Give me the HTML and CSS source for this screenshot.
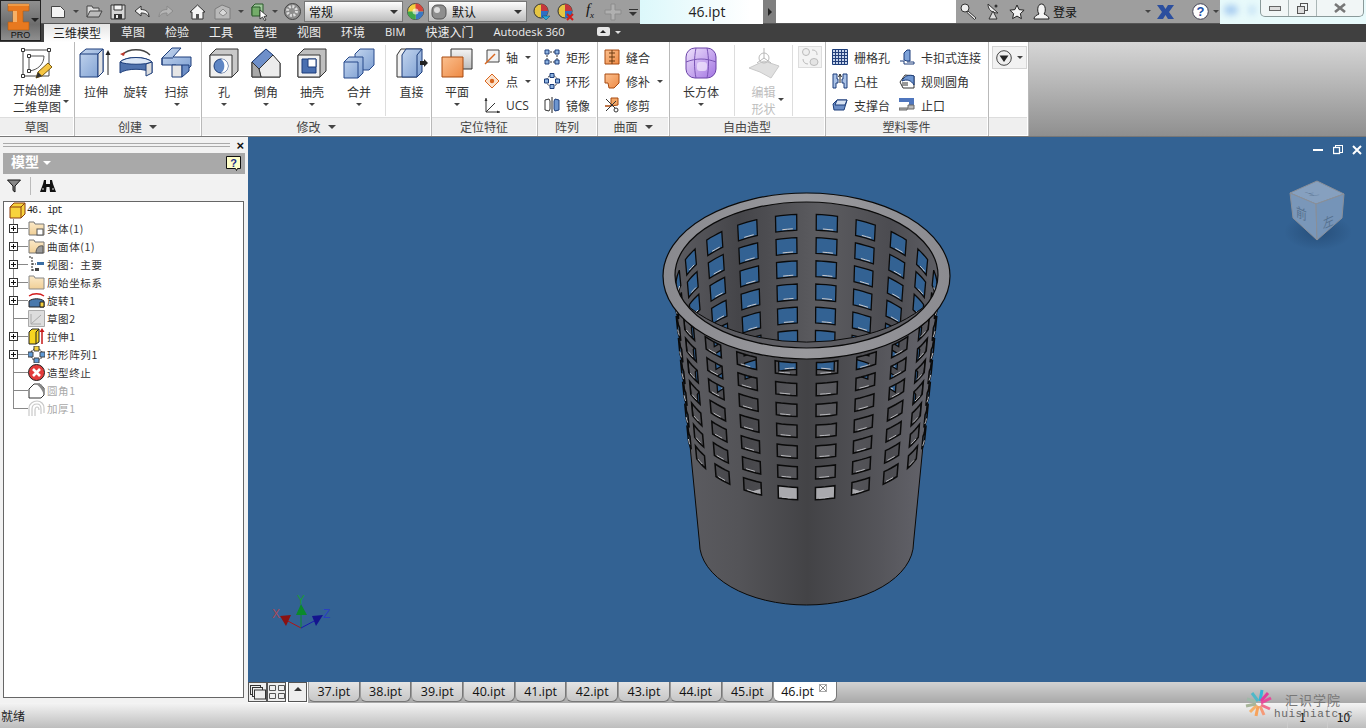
FILE: index.html
```html
<!DOCTYPE html>
<html lang="zh-CN">

<head>
    <meta charset="UTF-8">
    <meta name="viewport" content="width=device-width, initial-scale=1.0">
    <title>46.ipt</title>
    <link rel="stylesheet" href="styles.css">
</head>

<body>
    <svg class="defs" width="0" height="0">
        <defs>
            <linearGradient id="blueFace" x1="0" y1="0" x2="1" y2="1">
                <stop offset="0" stop-color="#c3d5ee" />
                <stop offset="1" stop-color="#7d9fd2" />
            </linearGradient>
            <linearGradient id="greyFace" x1="0" y1="0" x2="0" y2="1">
                <stop offset="0" stop-color="#f4f4f4" />
                <stop offset="1" stop-color="#bdbdbd" />
            </linearGradient>
            <linearGradient id="orangeFace" x1="0" y1="0" x2="1" y2="1">
                <stop offset="0" stop-color="#fbc08f" />
                <stop offset="1" stop-color="#ee8a45" />
            </linearGradient>
            <linearGradient id="purpleFace" x1="0" y1="0" x2="1" y2="1">
                <stop offset="0" stop-color="#efe2fc" />
                <stop offset="1" stop-color="#a274e2" />
            </linearGradient>
            <linearGradient id="folderFace" x1="0" y1="0" x2="0" y2="1">
                <stop offset="0" stop-color="#fbe9c8" />
                <stop offset="1" stop-color="#f0cf96" />
            </linearGradient>
        </defs>
    </svg>

    <!-- app button sits over the title and tab bars -->
    <div class="app-button">
        <svg width="23" height="28" viewBox="0 0 23 28">
            <path d="M1 1h21v7h-6v11h6v8H1v-8h5V8H1z" fill="#e8791f" stroke="#b05a12" stroke-width=".6" />
            <path d="M6 8h4v11H6z" fill="#f6b066" />
            <path d="M1 1h21v2H1z" fill="#f09a45" />
        </svg>
        <span class="app-arrow"></span>
        <span class="app-pro">PRO</span>
    </div>

    <header class="titlebar">
        <div class="qat">
            <button class="qat-btn w24"><svg width="16" height="16" viewBox="0 0 16 16"><path d="M1.500 2.500h9l4 4v7h-13z" fill="#f4f4f4" stroke="#444" /></svg></button>
            <span class="caret w12"></span>
            <button class="qat-btn w24"><svg width="17" height="15" viewBox="0 0 17 15"><path d="M1 13V2h5l1 2h6v3" fill="#ddd" stroke="#444" /><path d="M1 13l3-6h12l-3 6z" fill="#bbb" stroke="#444" /></svg></button>
            <button class="qat-btn w24"><svg width="16" height="16" viewBox="0 0 16 16"><path d="M1 1h14v14H1z" fill="#d5d5d5" stroke="#333" /><path d="M4 1h8v5H4z" fill="#f6f6f6" stroke="#333" /><path d="M4 10h8v5H4z" fill="#333" /><path d="M6 11h2v3H6z" fill="#eee" /></svg></button>
            <button class="qat-btn w24"><svg width="16" height="14" viewBox="0 0 16 14"><path d="M7 1L1 6l6 5V8c3 0 6 .5 8 4 0-5-3-7.500-8-7.500z" fill="#f2f2f2" stroke="#333" /></svg></button>
            <button class="qat-btn w24"><svg width="16" height="14" viewBox="0 0 16 14"><path d="M9 1l6 5-6 5V8c-3 0-6 .5-8 4 0-5 3-7.500 8-7.500z" fill="#b5b5b5" stroke="#8a8a8a" /></svg></button>
            <span class="gap7"></span>
            <button class="qat-btn w24"><svg width="17" height="16" viewBox="0 0 17 16"><path d="M1 8l7.500-7L16 8h-2v7H3V8z" fill="#f6f6f6" stroke="#333" /><path d="M7 10h3v5H7z" fill="#555" /></svg></button>
            <button class="qat-btn w24 ml2"><svg width="18" height="16" viewBox="0 0 18 16"><path d="M1 5l7-4 8 3v11H1z" fill="#b9b9b9" stroke="#7c7c7c" /><path d="M5 9l4-4 4 4-4 3z" fill="#d8d8d8" stroke="#8a8a8a" /></svg></button>
            <span class="caret w12"></span>
            <button class="qat-btn w24"><svg width="17" height="18" viewBox="0 0 17 18"><path d="M1 4l3-3h8v11H1z" fill="#9ec79a" stroke="#2b5a2b" /><path d="M1 4h8v9H1z" fill="#74ac6a" stroke="#2b5a2b" /><path d="M9 7l7 6-3 .5 2 3.500-1.500 .5-2-3.500-2.500 2z" fill="#fff" stroke="#222" stroke-width=".8" /></svg></button>
            <span class="caret w12 tight"></span>
            <button class="qat-btn w24"><svg width="17" height="17" viewBox="0 0 17 17"><circle cx="8.500" cy="8.500" r="8" fill="#8d8d8d" stroke="#444" /><circle cx="8" cy="8" r="4.500" fill="none" stroke="#ddd" stroke-width="3" stroke-dasharray="2 1.500" /></svg></button>
            <div class="combo w99"><span>常规</span><i class="caret"></i></div>
            <button class="qat-btn w25"><svg width="17" height="17" viewBox="0 0 17 17"><circle cx="8.500" cy="8.500" r="8" fill="#f4d03f" stroke="#444" /><path d="M8.500 8.500V.5a8 8 0 0 1 8 8z" fill="#d9453c" /><path d="M8.500 8.500h8a8 8 0 0 1-8 8z" fill="#3b77c4" /><path d="M8.500 8.500v8a8 8 0 0 1-8-8z" fill="#3fa84a" /><circle cx="8.500" cy="8.500" r="3" fill="#fff" opacity=".6" /></svg></button>
            <div class="combo w99"><svg width="16" height="16" viewBox="0 0 16 16"><rect x="1" y="1" width="14" height="14" rx="5" fill="#8e8e8e" stroke="#555" /><circle cx="6" cy="6" r="3" fill="#ddd" /></svg><span>默认</span><i class="caret"></i></div>
            <button class="qat-btn w24 ml3"><svg width="18" height="18" viewBox="0 0 18 18"><circle cx="8" cy="8" r="7" fill="#e6c542" stroke="#333" /><path d="M8 8V1a7 7 0 0 1 7 7z" fill="#c6373c" /><path d="M8 8h7a7 7 0 0 1-7 7z" fill="#2f6fc4" /><path d="M9 13h8l-4 4z" fill="#2aa7d8" stroke="#146" stroke-width=".5" /></svg></button>
            <button class="qat-btn w24"><svg width="18" height="18" viewBox="0 0 18 18"><circle cx="8" cy="8" r="7" fill="#e6c542" stroke="#333" /><path d="M8 8V1a7 7 0 0 1 7 7z" fill="#c6373c" /><path d="M8 8h7a7 7 0 0 1-7 7z" fill="#2f6fc4" /><path d="M10 11l6 6M16 11l-6 6" stroke="#d21c1c" stroke-width="2" /></svg></button>
            <span class="fx">f<sub>x</sub></span>
            <button class="qat-btn w24"><svg width="18" height="18" viewBox="0 0 18 18"><path d="M7 1h4v6h6v4h-6v6H7v-6H1V7h6z" fill="#b0b0b0" stroke="#8c8c8c" /></svg></button>
            <span class="menu-caret"></span>
        </div>
        <div class="doc-title">46.ipt</div>
        <div class="doc-arrow"><i></i></div>
        <div class="search"></div>
        <div class="infocenter">
            <svg width="17" height="17" viewBox="0 0 17 17"><circle cx="5" cy="5" r="4" fill="#eee" stroke="#333" /><path d="M8 8l8 7-1.500 1.500-7.500-7z" fill="#eee" stroke="#333" /></svg>
            <svg width="16" height="17" viewBox="0 0 16 17"><path d="M3 1c0 6 4 9 10 9z" fill="#eee" stroke="#333" /><path d="M8 8L4 16h8z" fill="#ddd" stroke="#333" /><circle cx="11" cy="3" r="1.500" fill="#333" /></svg>
            <svg width="16" height="16" viewBox="0 0 16 16"><path d="M8 1l2.100 4.600 5 .6-3.700 3.400 1 5L8 12.100 3.600 14.600l1-5L.9 6.200l5-.6z" fill="#f3f3f3" stroke="#222" /></svg>
            <svg width="17" height="17" viewBox="0 0 17 17"><path d="M1 16c0-3 3-4 5-5-2-2-2-10 2.500-10S13 9 11 11c2 1 5 2 5 5z" fill="#f4f4f4" stroke="#222" /></svg>
            <span class="login">登录</span>
            <span class="caret login-caret"></span>
            <svg width="17" height="14" viewBox="0 0 17 14"><path d="M0 0h6l2.500 4L11 0h6l-5 7 5 7h-6L8.500 10 6 14H0l5-7z" fill="#2c4f9e" /></svg>
            <svg class="help" width="17" height="17" viewBox="0 0 17 17"><circle cx="8.500" cy="8.500" r="7.800" fill="#fff" stroke="#445" /><text x="8.500" y="13" text-anchor="middle" class="help-mark">?</text></svg>
            <span class="caret help-caret"></span>
        </div>
        <div class="glass">
            <i class="glow g1"></i><i class="glow g2"></i>
            <div class="winbtns">
                <span><svg width="12" height="5"><rect x=".5" y=".5" width="11" height="4" fill="#ddd" stroke="#666" /></svg></span>
                <span><svg width="11" height="11"><rect x="3.500" y=".5" width="7" height="7" fill="none" stroke="#555" /><rect x=".5" y="3.500" width="7" height="7" fill="#ddd" stroke="#555" /></svg></span>
                <span class="wide"><svg width="12" height="10" viewBox="0 0 12 10"><path d="M1 1l10 8M11 1L1 9" stroke="#777" stroke-width="2.600" /></svg></span>
            </div>
        </div>
    </header>

    <nav class="tabs">
        <a class="tab active">三维模型</a>
        <a class="tab">草图</a>
        <a class="tab">检验</a>
        <a class="tab">工具</a>
        <a class="tab">管理</a>
        <a class="tab">视图</a>
        <a class="tab">环境</a>
        <a class="tab latin">BIM</a>
        <a class="tab">快速入门</a>
        <a class="tab latin">Autodesk 360</a>
        <span class="tab-toggle"><i></i></span>
        <span class="tab-caret"></span>
    </nav>

    <section class="ribbon">
        <div class="panel" style="width:75px">
            <div class="panel-body">
                <div class="big w74 sketch-btn">
                    <svg width="34" height="34" viewBox="0 0 34 34">
                        <path d="M3 3h26v26H3z" fill="none" stroke="#444" />
                        <path d="M9 9h15M9 9v15" fill="none" stroke="#555" /><path d="M24 9c0 8-6 14-15 15" fill="none" stroke="#555" />
                        <path d="M1.500 1.500h3v3h-3zM27.500 1.500h3v3h-3zM1.500 27.500h3v3h-3zM7.500 7.500h3v3h-3zM7.500 22.500h3v3h-3z" fill="#fff" stroke="#333" />
                        <path d="M16 31l2-6 10-9 4 4-10 9z" fill="#f5c542" stroke="#7a5a10" /><path d="M16 31l2-6 4 4z" fill="#333" />
                    </svg>
                    <span class="sketch-label">开始创建<br>二维草图</span>
                    <i class="caret sketch-caret"></i>
                </div>
            </div>
            <div class="panel-title">草图</div>
        </div>

        <div class="panel" style="width:127px">
            <div class="panel-body">
                <div class="big w40 ml1">
                    <svg width="34" height="32" viewBox="0 0 34 32"><path d="M1 7l6-5h17v23l-5 5H1z" fill="url(#blueFace)" stroke="#1c3d7a" /><path d="M19 30V7l5-5M1 7h18" fill="none" stroke="#1c3d7a" /><path d="M19 7l5-5v23l-5 5z" fill="#e4e4e4" stroke="#1c3d7a" /><path d="M29 28V7" stroke="#222" /><path d="M29 3l-2.500 5h5z" fill="#222" /></svg>
                    <span>拉伸</span>
                </div>
                <div class="big w39">
                    <svg width="34" height="32" viewBox="0 0 34 32"><path d="M3 8C10 1 24 1 31 8" fill="none" stroke="#444" stroke-width="1.500" /><path d="M1 7l5-2-1 4z" fill="#c0392b" /><path d="M1 15c6-6 26-6 32 0v11c-6-5-26-5-32 0z" fill="#4f72ad" stroke="#1c3d7a" /><path d="M1 15c6-6 26-6 32 0-6 3-26 3-32 0z" fill="#dbe6f5" stroke="#1c3d7a" /><path d="M27 17l6-2v11l-6 3z" fill="#ddd" stroke="#1c3d7a" /></svg>
                    <span>旋转</span>
                </div>
                <div class="big w43">
                    <svg width="32" height="32" viewBox="0 0 32 32"><path d="M1 11L11 1h9l-8 9h18v9l-7 7H15v-8H1z" fill="url(#blueFace)" stroke="#1c3d7a" /><path d="M11 18h10v12H11z" fill="#e6e6e6" stroke="#1c3d7a" /><path d="M21 30l7-6v-6l-7 0z" fill="#6d8fc7" stroke="#1c3d7a" /><path d="M1 11h11M1 11v7" fill="none" stroke="#1c3d7a" /></svg>
                    <span>扫掠</span><i class="caret"></i>
                </div>
            </div>
            <div class="panel-title">创建<i class="caret"></i></div>
        </div>

        <div class="panel" style="width:230px">
            <div class="panel-body">
                <div class="big w42 ml1">
                    <svg width="30" height="30" viewBox="0 0 30 30"><path d="M1 7l6-6h22v22l-6 6H1z" fill="#c9c9c9" stroke="#333" /><path d="M1 7h22v22H1z" fill="#efefef" stroke="#333" /><circle cx="12" cy="18" r="7" fill="#5f86c4" stroke="#1c3d7a" /><path d="M12 11a7 7 0 0 1 0 14 9 9 0 0 0 0-14z" fill="#fff" /></svg>
                    <span>孔</span><i class="caret"></i>
                </div>
                <div class="big w42">
                    <svg width="30" height="30" viewBox="0 0 30 30"><path d="M1 14L15 1l14 14v14H1z" fill="#d9d9d9" stroke="#333" /><path d="M1 14L15 1l7 6L8 21z" fill="#6e8fc9" stroke="#1c3d7a" /><path d="M8 21L22 7l7 8v14H10z" fill="#ececec" stroke="#333" /><path d="M1 14l7 7 2 8H1z" fill="#a8a8a8" stroke="#333" /></svg>
                    <span>倒角</span><i class="caret"></i>
                </div>
                <div class="big w46 ml2">
                    <svg width="30" height="30" viewBox="0 0 30 30"><path d="M1 7l6-6h22v22l-6 6H1z" fill="#bfbfbf" stroke="#333" /><path d="M1 7h22v22H1z" fill="#f1f1f1" stroke="#333" /><path d="M5 11h14v14H5z" fill="#496fb0" stroke="#1c3d7a" /><path d="M11 11h8v8h-8z" fill="#fff" stroke="#1c3d7a" /></svg>
                    <span>抽壳</span><i class="caret"></i>
                </div>
                <div class="big w48">
                    <svg width="32" height="30" viewBox="0 0 32 30"><path d="M12 6l5-5h14v16l-5 5H12z" fill="url(#blueFace)" stroke="#27498a" /><path d="M1 14l5-5h14v16l-5 5H1z" fill="url(#blueFace)" stroke="#27498a" /><path d="M1 14h14v16" fill="none" stroke="#27498a" /></svg>
                    <span>合并</span><i class="caret"></i>
                </div>
                <span class="vsep"></span>
                <div class="big w43 ml2">
                    <svg width="32" height="30" viewBox="0 0 32 30"><path d="M1 7l4-6h20v23l-4 5H1z" fill="#f1f1f1" stroke="#333" /><path d="M6 7l4-6h16v23l-5 5H6z" fill="url(#blueFace)" stroke="#1c3d7a" /><path d="M21 29V7l5-6" fill="none" stroke="#1c3d7a" /><path d="M24 13h4v-2l4 4-4 4v-2h-4z" fill="#222" /></svg>
                    <span>直接</span>
                </div>
            </div>
            <div class="panel-title">修改<i class="caret"></i></div>
        </div>

        <div class="panel" style="width:106px">
            <div class="panel-body">
                <div class="big w46 ml2">
                    <svg width="32" height="30" viewBox="0 0 32 30"><path d="M10 1h21v20H10z" fill="url(#greyFace)" stroke="#333" /><path d="M1 9h21v20H1z" fill="url(#orangeFace)" stroke="#a84a10" /></svg>
                    <span>平面</span><i class="caret"></i>
                </div>
                <div class="col near">
                    <div class="small"><svg width="16" height="16" viewBox="0 0 16 16"><path d="M3 1h12v12H3z" fill="#f2f2f2" stroke="#444" /><path d="M1 15L11 5" stroke="#d9661f" stroke-width="1.500" /></svg><span>轴</span><i class="caret"></i></div>
                    <div class="small"><svg width="16" height="16" viewBox="0 0 16 16"><path d="M8 1l7 7-7 7-7-7z" fill="#fbe3cd" stroke="#d9661f" /><circle cx="8" cy="8" r="2.200" fill="#d9661f" /></svg><span>点</span><i class="caret"></i></div>
                    <div class="small"><svg width="16" height="16" viewBox="0 0 16 16"><path d="M2 1v14h14M2 15L11 6" fill="none" stroke="#333" /><path d="M2 1l-1.500 3h3zM16 15l-3-1.500v3z" fill="#333" /></svg><span class="ucs">UCS</span></div>
                </div>
            </div>
            <div class="panel-title">定位特征</div>
        </div>

        <div class="panel" style="width:60px">
            <div class="panel-body">
                <div class="col">
                    <div class="small"><svg width="16" height="16" viewBox="0 0 16 16"><path d="M3 3h10M3 13h10M3 3v10M13 3v10" stroke="#333" stroke-dasharray="2 1" fill="none" /><path d="M1 1h4v4H1zM11 1h4v4h-4zM1 11h4v4H1zM11 11h4v4h-4z" fill="#8fb4e0" stroke="#1c3d7a" /></svg><span>矩形</span></div>
                    <div class="small"><svg width="16" height="16" viewBox="0 0 16 16"><circle cx="8" cy="8" r="5.500" fill="none" stroke="#333" stroke-dasharray="2 1" /><path d="M6 .5h4v4H6zM.5 6h4v4h-4zM11.500 6h4v4h-4zM6 11.500h4v4H6z" fill="#8fb4e0" stroke="#1c3d7a" /></svg><span>环形</span></div>
                    <div class="small"><svg width="16" height="16" viewBox="0 0 16 16"><path d="M1 3l4-1 1 2v8l-1 2-4-1z" fill="#fff" stroke="#333" /><path d="M15 3l-4-1-1 2v8l1 2 4-1z" fill="#6d96d0" stroke="#1c3d7a" /><path d="M8 0v16" stroke="#222" /></svg><span>镜像</span></div>
                </div>
            </div>
            <div class="panel-title">阵列</div>
        </div>

        <div class="panel" style="width:72px">
            <div class="panel-body">
                <div class="col">
                    <div class="small"><svg width="16" height="16" viewBox="0 0 16 16"><path d="M1 1h14v14H1z" fill="url(#orangeFace)" stroke="#a84a10" /><path d="M8 1v14M5 4h6M5 8h6M5 12h6" stroke="#6b3a10" /></svg><span>缝合</span></div>
                    <div class="small"><svg width="16" height="16" viewBox="0 0 16 16"><path d="M1 1h14v9l-5 5H5l-1-5H1z" fill="url(#orangeFace)" stroke="#a84a10" /></svg><span>修补</span><i class="caret"></i></div>
                    <div class="small"><svg width="16" height="16" viewBox="0 0 16 16"><path d="M1 9h6V1h7v7l-7 1z" fill="#f3a868" stroke="#a84a10" /><path d="M2 2l10 10M2 14L12 4" stroke="#333" /><circle cx="12" cy="13" r="2" fill="#fff" stroke="#333" /></svg><span>修剪</span></div>
                </div>
            </div>
            <div class="panel-title">曲面<i class="caret"></i></div>
        </div>

        <div class="panel" style="width:156px">
            <div class="panel-body">
                <div class="big w62">
                    <svg width="32" height="32" viewBox="0 0 32 32"><rect x="1" y="1" width="30" height="30" rx="9" fill="url(#purpleFace)" stroke="#6a43a8" /><path d="M1 15c10-4 20-4 30 0M11 1c-2 10-2 20 0 30M22 1c2 10 2 20 0 30" fill="none" stroke="#7a55b5" /><rect x="12" y="15" width="10" height="9" rx="3" fill="#f3eafd" opacity=".7" /></svg>
                    <span>长方体</span><i class="caret"></i>
                </div>
                <span class="vsep"></span>
                <div class="big w53 off">
                    <svg width="34" height="32" viewBox="0 0 34 32"><path d="M2 21l15-7 15 5-8 12-11-6z" fill="#e0e0e0" stroke="#c9c9c9" /><circle cx="17" cy="11" r="5" fill="none" stroke="#bbb" /><path d="M17 11V1M17 11l-7 5M17 11l7 5" stroke="#b5b5b5" /></svg>
                    <span>编辑<br>形状</span>
                    <i class="caret edit-caret"></i>
                </div>
                <span class="vsep"></span>
                <div class="disabled-btn"><svg width="18" height="18" viewBox="0 0 18 18"><circle cx="5" cy="4" r="3.500" fill="#eee" stroke="#bbb" /><ellipse cx="13" cy="14" rx="4" ry="3.500" fill="#e4e4e4" stroke="#bbb" /><path d="M11 2c3 0 5 1 5 5M2 11c0 3 2 5 5 5" fill="none" stroke="#bbb" /></svg></div>
            </div>
            <div class="panel-title">自由造型</div>
        </div>

        <div class="panel" style="width:163px">
            <div class="panel-body">
                <div class="col plastic">
                    <div class="small"><svg width="16" height="16" viewBox="0 0 16 16"><path d="M.5.500h15v15H.5z" fill="#c6d4ea" stroke="#1c3d7a" /><path d="M3.500 1v14M6.500 1v14M9.500 1v14M12.500 1v14M1 3.500h14M1 6.500h14M1 9.500h14M1 12.500h14" stroke="#233f7a" /></svg><span>栅格孔</span></div>
                    <div class="small"><svg width="16" height="16" viewBox="0 0 16 16"><path d="M1 1h4v5h1v4H4v5H1zM15 1h-4v5h-1v4h2v5h3z" fill="#a9c1e6" stroke="#1c3d7a" /><path d="M8 10V2M6.500 4L8 1l1.500 3" fill="none" stroke="#222" /></svg><span>凸柱</span></div>
                    <div class="small"><svg width="16" height="16" viewBox="0 0 16 16"><path d="M1 7l4-4h10l-3 10H2z" fill="#6d8fc7" stroke="#1c3d7a" /><path d="M5 3h10l-2 5H3z" fill="#d8e3f3" stroke="#1c3d7a" /></svg><span>支撑台</span></div>
                </div>
                <div class="col">
                    <div class="small"><svg width="16" height="16" viewBox="0 0 16 16"><path d="M1 12h4v3h10v-2h-7" fill="none" stroke="#1c3d7a" /><path d="M5 4l3-3h3v11H8l-3-1z" fill="#7ea2d8" stroke="#1c3d7a" /></svg><span>卡扣式连接</span></div>
                    <div class="small"><svg width="16" height="16" viewBox="0 0 16 16"><path d="M1 9l5-7 9 1v12H4z" fill="#fff" stroke="#333" /><path d="M3 8c2-5 7-7 12-5v9c-3-5-7-6-12-4z" fill="#6f96d0" stroke="#1c3d7a" /><path d="M3 10h6M3 12h6" stroke="#333" /></svg><span>规则圆角</span></div>
                    <div class="small"><svg width="16" height="16" viewBox="0 0 16 16"><path d="M0 1h15v4H0zM10 5h5v4h-5z" fill="#4f76bd" /><path d="M0 11h9V8h6v4H8v1H0z" fill="#b9b9b9" stroke="#666" /></svg><span>止口</span></div>
                </div>
            </div>
            <div class="panel-title">塑料零件</div>
        </div>

        <div class="panel last">
            <div class="panel-body">
                <div class="more"><svg width="16" height="16" viewBox="0 0 16 16"><circle cx="8" cy="8" r="7.300" fill="#eee" stroke="#444" /><path d="M3.500 5.500h9L8 12z" fill="#222" /></svg><i class="caret"></i></div>
            </div>
            <div class="panel-title"></div>
        </div>

        <div class="ribbon-fill"></div>
    </section>

    <main class="main">
        <aside class="browser">
            <div class="grip"><i></i><b>×</b></div>
            <div class="browser-head"><span>模型</span><i></i>
                <svg class="help-box" width="15" height="15" viewBox="0 0 15 15"><path d="M.5.500h14v12h-3l-1 2-1-2h-9z" fill="#ffffc8" stroke="#111" /><text x="7.500" y="11" text-anchor="middle" class="help-q">?</text></svg>
            </div>
            <div class="browser-tools">
                <svg width="14" height="14" viewBox="0 0 14 14"><path d="M.5 1h13L8 7v6l-2-1.500V7z" fill="#888" stroke="#111" /></svg>
                <span class="tool-sep"></span>
                <svg width="16" height="14" viewBox="0 0 16 14"><path d="M4 1h2v4h4V1h2l1 4 3 8h-6l-.5-5h-3L6 13H0l3-8z" fill="#111" /><path d="M2 10h2M12 10h2" stroke="#ddd" /></svg>
            </div>
            <ul class="tree">
                <li class="root"><svg width="17" height="17" viewBox="0 0 17 17"><path d="M1 5l4-4h11v11l-4 4H1z" fill="#f7d33c" stroke="#8a3d0e" /><path d="M1 5h11v11M12 5l4-4" fill="none" stroke="#8a3d0e" /></svg><span>46. ipt</span></li>
                <li class="node"><i class="pm"></i><svg width="17" height="17" viewBox="0 0 17 17"><path d="M1 15V2h5l1 2h9v11z" fill="url(#folderFace)" stroke="#777" /><rect x="9" y="9" width="6" height="6" fill="#fff" stroke="#555" /></svg><span>实体(1)</span></li>
                <li class="node"><i class="pm"></i><svg width="17" height="17" viewBox="0 0 17 17"><path d="M1 15V2h5l1 2h9v11z" fill="url(#folderFace)" stroke="#777" /><path d="M8 15c0-5 3-8 7-7v7z" fill="#9a9a9a" stroke="#555" /></svg><span>曲面体(1)</span></li>
                <li class="node"><i class="pm"></i><svg width="17" height="17" viewBox="0 0 17 17"><path d="M1 1h3M4 1v14M4 8h4M4 14h4" fill="none" stroke="#222" stroke-dasharray="2 1" /><path d="M9 6h7v3H9z" fill="#3a6ea5" /><path d="M7 12h4v3H7z" fill="#444" /></svg><span>视图：主要</span></li>
                <li class="node"><i class="pm"></i><svg width="17" height="17" viewBox="0 0 17 17"><path d="M1 15V2h5l1 2h9v11z" fill="url(#folderFace)" stroke="#888" /></svg><span>原始坐标系</span></li>
                <li class="node"><i class="pm"></i><svg width="17" height="17" viewBox="0 0 17 17"><path d="M1 4c4-3 11-3 15 0" fill="none" stroke="#d21c1c" stroke-width="1.300" /><path d="M1 9c4-3 11-3 15 0v6H1z" fill="#4a79ad" stroke="#222" /><path d="M12 10h4v5h-4z" fill="#f4d03f" stroke="#222" /></svg><span>旋转1</span></li>
                <li class="node"><svg width="17" height="17" viewBox="0 0 17 17"><path d="M.5.500h16v16H.5z" fill="#ddd" stroke="#aaa" /><path d="M3 4v10h10M3 14L13 5" fill="none" stroke="#aaa" /></svg><span>草图2</span></li>
                <li class="node"><i class="pm"></i><svg width="17" height="17" viewBox="0 0 17 17"><path d="M1 4l3-3h7v13l-3 2H1z" fill="#f7d520" stroke="#222" /><path d="M8 16V4l3-3" fill="none" stroke="#222" /><path d="M14 16V3" stroke="#c51818" stroke-width="1.500" /><path d="M14 0l-2.500 4h5z" fill="#c51818" /></svg><span>拉伸1</span></li>
                <li class="node"><i class="pm"></i><svg width="17" height="17" viewBox="0 0 17 17"><circle cx="8.500" cy="8.500" r="6" fill="none" stroke="#222" stroke-dasharray="2 1" /><path d="M6 0h5v5H6z" fill="#f4d03f" stroke="#444" /><path d="M0 6h5v5H0zM12 6h5v5h-5zM6 12h5v5H6z" fill="#5f9ad6" stroke="#444" /></svg><span>环形阵列1</span></li>
                <li class="node"><svg width="17" height="17" viewBox="0 0 17 17"><circle cx="8.500" cy="8.500" r="8" fill="#e33b3b" stroke="#222" /><path d="M5 5l7 7M12 5l-7 7" stroke="#fff" stroke-width="2.600" /></svg><span>造型终止</span></li>
                <li class="node dim"><svg width="17" height="17" viewBox="0 0 17 17"><path d="M1 7l5-5h6l4 4v7l-3 3H1z" fill="#fff" stroke="#333" /><path d="M8 2h5l3 4v7c-2-6-5-9-8-11z" fill="#888" /></svg><span>圆角1</span></li>
                <li class="node dim"><svg width="17" height="17" viewBox="0 0 17 17"><path d="M1 16V8c0-4 4-7 8-7s7 3 7 7v5M4 16V9c0-3 2-5 5-5s4 2 4 5v5M7 16V10c0-2 1-3 2-3s2 1 2 3" fill="none" stroke="#c9c9c9" stroke-width="1.200" /></svg><span>加厚1</span></li>
            </ul>
        </aside>

        <div class="workspace">
            <div class="canvas">
                <svg id="scene" class="scene" width="1118" height="545" viewBox="248 137 1118 545">
                    <defs>
                        <linearGradient id="wallBack" gradientUnits="userSpaceOnUse" x1="670" y1="0" x2="945" y2="0">
                            <stop offset="0" stop-color="#5d5d62" />
                            <stop offset=".25" stop-color="#454549" />
                            <stop offset=".55" stop-color="#5c5c60" />
                            <stop offset=".8" stop-color="#4c4c51" />
                            <stop offset="1" stop-color="#606066" />
                        </linearGradient>
                        <linearGradient id="wallFront" gradientUnits="userSpaceOnUse" x1="670" y1="0" x2="945" y2="0">
                            <stop offset="0" stop-color="#5e5e63" />
                            <stop offset=".25" stop-color="#545458" />
                            <stop offset=".5" stop-color="#434346" />
                            <stop offset=".75" stop-color="#545459" />
                            <stop offset="1" stop-color="#686870" />
                        </linearGradient>
                        <linearGradient id="rimFill" gradientUnits="userSpaceOnUse" x1="660" y1="0" x2="950" y2="0">
                            <stop offset="0" stop-color="#89898e" />
                            <stop offset=".5" stop-color="#99999d" />
                            <stop offset="1" stop-color="#8b8b90" />
                        </linearGradient>
                        <mask id="backMask" maskUnits="userSpaceOnUse" x="248" y="137" width="1118" height="545">
                            <rect x="248" y="137" width="1118" height="545" fill="#fff" />
                            <g id="backCut" fill="#000"></g>
                        </mask>
                        <mask id="frontMask" maskUnits="userSpaceOnUse" x="248" y="137" width="1118" height="545">
                            <rect x="248" y="137" width="1118" height="545" fill="#fff" />
                            <ellipse cx="806.500" cy="275" rx="131.500" ry="73" fill="#000" />
                            <g id="frontCut" fill="#000"></g>
                        </mask>
                        <clipPath id="bodyClip"><path d="M673.500 276L699.500 543A107 62 0 0 0 913.500 543L939.500 276A133 75 0 0 0 673.500 276Z" /></clipPath>
                        <radialGradient id="cubeShadow"><stop offset="0" stop-color="#1d3f66" stop-opacity=".55" /><stop offset="1" stop-color="#1d3f66" stop-opacity="0" /></radialGradient>
                    </defs>

                    <!-- basket, back to front -->
                    <g mask="url(#backMask)" fill="url(#wallBack)">
                        <ellipse cx="806.500" cy="275" rx="132" ry="74" />
                        <path d="M673.500 276L699.500 543A107 62 0 0 0 913.500 543L939.500 276Z" />
                    </g>
                    <g id="backLines" fill="none" stroke="#0a0a0a" stroke-width="1.300" clip-path="url(#bodyClip)"></g>
                    <g id="backSills" fill="none" stroke="#c9c9cd" stroke-width="1" clip-path="url(#bodyClip)"></g>
                    <ellipse cx="806.500" cy="543" rx="107" ry="60" fill="#a9a9ad" clip-path="url(#bodyClip)" />
                    <path mask="url(#frontMask)" d="M673.500 276L699.500 543A107 62 0 0 0 913.500 543L939.500 276Z" fill="url(#wallFront)" stroke="#0a0a0a" />
                    <g id="frontLines" fill="none" stroke="#0a0a0a" stroke-width="1.500"></g>
                    <g id="frontSills" fill="none" stroke="#b9b9bd" stroke-width="1"></g>
                    <path d="M666 281A141 81 0 0 0 947 281L947 276A143.500 83 0 0 1 666 276Z" fill="#5c5c61" stroke="#0a0a0a" />
                    <path fill-rule="evenodd" d="M663 276a143.500 83 0 1 0 287 0a143.500 83 0 1 0-287 0ZM675 275a131.500 73 0 1 0 263 0a131.500 73 0 1 0-263 0Z" fill="url(#rimFill)" stroke="#0a0a0a" stroke-width="1.200" />

                    <!-- triad -->
                    <g class="triad">
                        <path d="M301 628l-15-8" stroke="#b01414" fill="none" />
                        <path d="M301 608v20" stroke="#0d8a2a" />
                        <path d="M301 628l15-8" stroke="#1a1ab0" />
                        <path d="M280 616l11-1-5 11z" fill="#8a1212" />
                        <path d="M323 615l-11 1 4 10z" fill="#14148e" />
                        <path d="M301 604l6 11h-11z" fill="#0a8a2a" />
                        <text x="272" y="618" fill="#a84a5a" class="axis">X</text>
                        <text x="297" y="604" fill="#1a9a3a" class="axis">Y</text>
                        <text x="323" y="618" fill="#2a3fc0" class="axis">Z</text>
                    </g>

                    <!-- view cube -->
                    <ellipse cx="1318" cy="232" rx="34" ry="18" fill="url(#cubeShadow)" />
                    <path d="M1290 193l27-12 27 13-28 10z" fill="#86a0bf" stroke="#8a8f98" />
                    <path d="M1290 193l26 11 1 36-24-22z" fill="#7a97b9" stroke="#8a8f98" />
                    <path d="M1344 194l-28 10 1 36 25-22z" fill="#7594b8" stroke="#8a8f98" />
                    <text class="cube-label" transform="matrix(.9 -.1 .9 .35 1309 196)">上</text>
                    <text class="cube-label" transform="matrix(.9 .4 0 1.100 1296 216)">前</text>
                    <text class="cube-label" transform="matrix(.9 -.4 0 1.100 1323 229)">左</text>
                </svg>
                <div class="view-ctrls">
                    <svg width="11" height="11"><rect y="5" width="10" height="2" fill="#fff" /></svg>
                    <svg width="10" height="10"><rect x="2.500" y=".5" width="7" height="7" fill="none" stroke="#fff" /><rect x=".5" y="2.500" width="6" height="6" fill="#336293" stroke="#fff" stroke-width="1.300" /></svg>
                    <svg width="10" height="10" viewBox="0 0 10 10"><path d="M1 1l8 8M9 1L1 9" stroke="#fff" stroke-width="2" /></svg>
                </div>
            </div>
            <div class="doc-strip">
                <div class="strip-btns">
                    <span><svg width="16" height="15" viewBox="0 0 16 15"><rect x=".5" y=".5" width="10" height="9" fill="none" stroke="#333" /><rect x="2.500" y="2.500" width="10" height="9" fill="#eee" stroke="#333" /><rect x="4.500" y="5" width="11" height="9" fill="#eee" stroke="#333" /></svg></span>
                    <span><svg width="16" height="14" viewBox="0 0 16 14"><path d="M.5.500h6v5h-6zM9.500.500h6v5h-6zM.5 8.500h6v5h-6zM9.500 8.500h6v5h-6z" fill="none" stroke="#555" /></svg></span>
                    <span class="up"><i></i></span>
                </div>
                <a class="doc-tab">37.ipt</a>
                <a class="doc-tab">38.ipt</a>
                <a class="doc-tab">39.ipt</a>
                <a class="doc-tab">40.ipt</a>
                <a class="doc-tab">41.ipt</a>
                <a class="doc-tab">42.ipt</a>
                <a class="doc-tab">43.ipt</a>
                <a class="doc-tab">44.ipt</a>
                <a class="doc-tab">45.ipt</a>
                <a class="doc-tab current">46.ipt<svg width="8" height="8"><rect x=".5" y=".5" width="7" height="7" fill="none" stroke="#aaa" /><path d="M1 1l6 6M7 1L1 7" stroke="#888" /></svg></a>
            </div>
        </div>
    </main>

    <footer class="status">
        <span class="status-text">就绪</span>
        <span class="cell c1">1</span>
        <span class="cell c2">10</span>
    </footer>

    <!-- site watermark over the status bar -->
    <div class="watermark">
        <svg width="28" height="28" viewBox="-14 -14 28 28">
            <g stroke-width="3">
                <path d="M1-2L3-13" stroke="#35b5d8" /><path d="M2-2L9-10" stroke="#e23d9b" /><path d="M2 0L12-5" stroke="#e64a9a" />
                <path d="M2 2L11 6" stroke="#ef6f8f" /><path d="M1 3L5 12" stroke="#f59a78" /><path d="M-1 3L-3 13" stroke="#f7a35c" />
                <path d="M-2 2L-9 9" stroke="#f5b06a" /><path d="M-3 1L-13 3" stroke="#a8b59a" /><path d="M-3-1L-12-4" stroke="#9fb8a8" /><path d="M-1-2L-7-10" stroke="#4fb8c8" />
            </g>
        </svg>
        <div class="wm-text"><span class="wm-cn">汇识学院</span><span class="wm-en">huishiatc.c</span></div>
    </div>

    <script src="basket.js"></script>
</body>

</html>
```

FILE: styles.css
```css
* {
    box-sizing: border-box;
}

html,
body {
    margin: 0;
    height: 100%;
}

body {
    position: relative;
    width: 1366px;
    height: 728px;
    overflow: hidden;
    display: flex;
    flex-direction: column;
    font-family: "Noto Sans CJK SC", "Noto Sans", sans-serif;
    font-size: 12px;
    color: #333;
    background: #fff;
}

.defs {
    position: absolute;
}

svg {
    display: block;
    flex: none;
}

button {
    border: none;
    background: none;
    padding: 0;
    display: flex;
    align-items: center;
    justify-content: center;
}

.caret {
    display: inline-block;
    flex: none;
    width: 0;
    height: 0;
    border-left: 3px solid transparent;
    border-right: 3px solid transparent;
    border-top: 3px solid #444;
}

/* title bar */
.app-button {
    position: absolute;
    left: 0;
    top: 0;
    z-index: 3;
    width: 41px;
    height: 41px;
    background: linear-gradient(#8f8f8f, #6d6d6d 60%, #8f8f8f);
    border: 1px solid #222;
    padding: 2px 0 0 6px;
}

.app-arrow {
    position: absolute;
    left: 30px;
    top: 17px;
    border-left: 4px solid transparent;
    border-right: 4px solid transparent;
    border-top: 4px solid #222;
}

.app-pro {
    position: absolute;
    left: 0;
    right: 0;
    bottom: -1px;
    text-align: center;
    font: 9px/11px "Liberation Sans", sans-serif;
    color: #111;
}

.titlebar {
    display: flex;
    height: 24px;
    flex: none;
    background: #9e9e9e;
}

.qat {
    display: flex;
    align-items: center;
    width: 640px;
    padding-left: 46px;
    background: #9e9e9e;
    border-bottom: 1px solid #555;
}

.w24 { width: 24px; }
.w25 { width: 25px; }
.w12 { margin: 0 3px; }
.w12.tight { margin: 0 2px 0 1px; }
.gap7 { width: 7px; }
.ml1 { margin-left: 1px; }
.ml2 { margin-left: 2px; }
.ml3 { margin-left: 3px; }

.combo {
    display: flex;
    align-items: center;
    gap: 3px;
    height: 21px;
    padding: 0 4px 0 2px;
    border: 1px solid #777;
    background: linear-gradient(#fdfdfd, #bdbdbd);
    color: #111;
    line-height: 16px;
}

.w99 { width: 99px; }

.combo span {
    flex: 1;
    margin-left: 2px;
}

.combo .caret {
    border-top-color: #333;
    border-left-width: 4px;
    border-right-width: 4px;
    border-top-width: 4px;
}

.fx {
    width: 22px;
    margin-left: 1px;
    text-align: center;
    font: italic 15px/18px "Liberation Serif", serif;
    color: #111;
}

.fx sub {
    font-size: 9px;
}

.menu-caret {
    margin-left: 4px;
    width: 9px;
    height: 6px;
    border-top: 1px solid #333;
    position: relative;
}

.menu-caret::after {
    content: "";
    position: absolute;
    left: 0;
    top: 2px;
    border-left: 4.500px solid transparent;
    border-right: 4.500px solid transparent;
    border-top: 4px solid #333;
}

.doc-title {
    width: 123px;
    padding-left: 11px;
    text-align: center;
    font: 14px/23px "Open Sans", sans-serif;
    color: #222;
    background: linear-gradient(90deg, #dcf8fb, #fff 90%);
}

.doc-arrow {
    width: 13px;
    display: flex;
    align-items: center;
    justify-content: center;
    background: #7f7f7f;
    border-bottom: 1px solid #555;
}

.doc-arrow i {
    border-top: 4px solid transparent;
    border-bottom: 4px solid transparent;
    border-left: 4px solid #222;
}

.search {
    width: 180px;
    background: #fff;
    border-bottom: 1px solid #555;
}

.infocenter {
    width: 264px;
    display: flex;
    align-items: center;
    gap: 8px;
    padding-left: 4px;
    background: #9e9e9e;
    border-bottom: 1px solid #555;
}

.login {
    color: #111;
    margin-left: -5px;
    width: 84px;
}

.login-caret {
    margin-right: -2px;
}

.help {
    margin-left: 10px;
    margin-right: -1px;
}

.help-caret {
    margin-left: -3px;
}

.help-mark {
    font: bold 13px "Liberation Sans", sans-serif;
    fill: #1c4fa8;
}

.glass {
    flex: 1;
    position: relative;
    background: #e8fafb;
}

.glow {
    position: absolute;
    top: 5px;
    height: 10px;
    border-radius: 5px;
    background: #a9cdf0;
    filter: blur(3px);
}

.g1 { left: 4px; width: 14px; }
.g2 { left: 28px; width: 8px; opacity: .5; }

.winbtns {
    position: absolute;
    left: 40px;
    top: 0;
    display: flex;
    height: 17px;
    border: 1px solid #8a9a9a;
    border-top: none;
    border-radius: 0 0 5px 5px;
    background: #f1f6f6;
}

.winbtns span {
    width: 28px;
    display: flex;
    align-items: center;
    justify-content: center;
    border-right: 1px solid #aab6b6;
}

.winbtns .wide {
    width: 46px;
    border-right: none;
}

/* ribbon tabs */
.tabs {
    display: flex;
    align-items: stretch;
    height: 18px;
    flex: none;
    padding-left: 44px;
    background: #404040;
    color: #eee;
}

.tab {
    padding: 0 10px;
    font-size: 12px;
    line-height: 15px;
    white-space: nowrap;
}

.tab.latin {
    font-family: "Open Sans", sans-serif;
    font-size: 11.200px;
}

.tab.active {
    width: 66px;
    margin-right: 1px;
    padding: 1px 0 0;
    text-align: center;
    color: #222;
    background: linear-gradient(#e4e4e4, #fff);
}

.tab-toggle {
    margin: 3px 0 0 22px;
    width: 13px;
    height: 9px;
    border-radius: 2px;
    background: #e6e6e6;
    display: flex;
    align-items: center;
    justify-content: center;
}

.tab-toggle i {
    border-left: 3px solid transparent;
    border-right: 3px solid transparent;
    border-bottom: 3px solid #222;
}

.tab-caret {
    margin: 7px 0 0 5px;
    border-left: 3px solid transparent;
    border-right: 3px solid transparent;
    border-top: 3px solid #ddd;
}

/* ribbon */
.ribbon {
    display: flex;
    height: 95px;
    flex: none;
    border-bottom: 1px solid #777;
}

.panel {
    display: flex;
    flex-direction: column;
    flex: none;
    background: #fff;
    border-right: 1px solid #b9b9b9;
    padding-right: 1px;
}

.panel.last {
    width: 40px;
}

.panel-body {
    flex: 1;
    display: flex;
    align-items: stretch;
}

.panel-title {
    height: 18px;
    margin-bottom: 1px;
    display: flex;
    align-items: center;
    justify-content: center;
    gap: 7px;
    background: #efefef;
    border-top: 1px solid #ddd;
    line-height: 14px;
    color: #444;
}

.panel-title .caret {
    border-left-width: 4px;
    border-right-width: 4px;
    border-top-width: 4px;
}

.big {
    display: flex;
    flex-direction: column;
    align-items: center;
    position: relative;
    padding-top: 5px;
    flex: none;
    line-height: 17px;
    text-align: center;
}

.big svg {
    height: 32px;
}

.big > span {
    margin-top: 4px;
}

.big .caret {
    margin-top: 3px;
}

.w39 { width: 39px; }
.w40 { width: 40px; }
.w42 { width: 42px; }
.w43 { width: 43px; }
.w46 { width: 46px; }
.w48 { width: 48px; }
.w53 { width: 53px; }
.w62 { width: 62px; }
.w74 { width: 74px; }

.sketch-btn svg {
    height: 34px;
}

.sketch-btn > .sketch-label {
    margin-top: 0;
}

.sketch-caret {
    position: absolute;
    right: 5px;
    top: 55px;
}

.vsep {
    width: 1px;
    margin: 3px 2px 1px;
    background: #ddd;
    flex: none;
}

.col {
    display: flex;
    flex-direction: column;
    padding: 3px 0 0 6px;
    flex: none;
}

.col.near {
    padding-left: 4px;
}

.small {
    display: flex;
    align-items: center;
    height: 24px;
    gap: 6px;
    white-space: nowrap;
}

.small .caret {
    margin-left: 1px;
}

.ucs {
    font-family: "Open Sans", sans-serif;
}

.plastic {
    width: 67px;
}

.off {
    color: #bdbdbd;
}

.off svg {
    height: 32px;
}

.edit-caret {
    position: absolute;
    right: 6px;
    top: 53px;
}

.disabled-btn {
    width: 24px;
    height: 22px;
    margin: 4px 0 0 3px;
    display: flex;
    align-items: center;
    justify-content: center;
    background: #f3f3f3;
    border: 1px solid #ddd;
}

.more {
    width: 35px;
    height: 23px;
    margin: 4px 0 0 3px;
    display: flex;
    align-items: center;
    gap: 5px;
    padding-left: 3px;
    background: #f2f2f2;
    border: 1px solid #d5d5d5;
}

.ribbon-fill {
    flex: 1;
    background: linear-gradient(#d6d6d6, #8f8f8f);
}

/* main area */
.main {
    flex: 1;
    display: flex;
    min-height: 0;
}

.browser {
    width: 248px;
    flex: none;
    display: flex;
    flex-direction: column;
    padding: 0 3px 5px;
    background: #f2f2f2;
}

.grip {
    height: 16px;
    display: flex;
    align-items: center;
    justify-content: space-between;
    padding-right: 1px;
}

.grip i {
    display: block;
    width: 227px;
    height: 4px;
    border-top: 1px solid #aaa;
    border-bottom: 1px solid #aaa;
}

.grip b {
    font: bold 13px/13px "Liberation Sans", sans-serif;
    color: #111;
}

.browser-head {
    height: 21px;
    display: flex;
    align-items: center;
    padding: 0 4px 0 8px;
    background: #a9a9a9;
    color: #fff;
    font-size: 14px;
    line-height: 15px;
    font-weight: 700;
}

.browser-head span {
    margin-top: -4px;
}

.browser-head i {
    margin: -1px 0 0 4px;
    border-left: 4px solid transparent;
    border-right: 4px solid transparent;
    border-top: 4px solid #fff;
}

.help-box {
    margin-left: auto;
}

.help-q {
    font: bold 11px "Liberation Sans", sans-serif;
    fill: #1c2f8a;
}

.browser-tools {
    height: 27px;
    display: flex;
    align-items: center;
    padding: 0 0 3px 4px;
}

.tool-sep {
    width: 1px;
    height: 18px;
    margin: 0 9px;
    background: #bbb;
}

.tree {
    flex: 1;
    margin: 0 1px 0 0;
    padding: 0;
    list-style: none;
    background: #fff;
    border: 1px solid #666;
    font-size: 11px;
    color: #333;
}

.tree li {
    position: relative;
    display: flex;
    align-items: center;
    height: 18px;
    padding-left: 24px;
    gap: 2px;
}

.tree .root {
    padding-left: 5px;
    height: 17px;
    gap: 1px;
}

.root span {
    font: 10px/14px "Liberation Mono", monospace;
    letter-spacing: -1px;
    color: #222;
}

.node span {
    font-size: 10.500px;
    letter-spacing: .6px;
}

/* connector lines of the tree */
.node::before {
    content: "";
    position: absolute;
    left: 9px;
    top: 0;
    width: 14px;
    height: 9px;
    border-left: 1px solid #888;
    border-bottom: 1px solid #888;
}

.node:not(:last-child)::after {
    content: "";
    position: absolute;
    left: 9px;
    top: 9px;
    height: 9px;
    border-left: 1px solid #888;
}

.pm {
    position: absolute;
    z-index: 1;
    left: 5px;
    top: 5px;
    width: 9px;
    height: 9px;
    border: 1px solid #333;
    background:
        linear-gradient(#111, #111) center / 5px 1px no-repeat,
        linear-gradient(#111, #111) center / 1px 5px no-repeat,
        #fff;
}

.dim span {
    color: #a9a9a9;
}

.workspace {
    flex: 1;
    display: flex;
    flex-direction: column;
    min-width: 0;
}

.canvas {
    position: relative;
    flex: 1;
    min-height: 0;
    background: #336293;
    overflow: hidden;
}

.scene {
    position: absolute;
    left: 0;
    top: 0;
}

.axis {
    font: 12px "Liberation Sans", sans-serif;
}

.cube-label {
    font-size: 12px;
    fill: #56718f;
}

.view-ctrls {
    position: absolute;
    right: 4px;
    top: 7px;
    display: flex;
    align-items: center;
    gap: 9px;
}

.doc-strip {
    height: 21px;
    flex: none;
    display: flex;
    align-items: stretch;
    background: linear-gradient(#d2d2d2, #a8a8a8);
}

.strip-btns {
    display: flex;
    width: 60px;
    flex: none;
    background: #fff;
    padding-bottom: 1px;
}

.strip-btns span {
    width: 19px;
    display: flex;
    align-items: center;
    justify-content: center;
    border: 1px solid #555;
    background: #eee;
}

.strip-btns .up {
    width: 19px;
    margin-left: 2px;
    align-items: flex-start;
    padding-top: 4px;
}

.up i {
    border-left: 4px solid transparent;
    border-right: 4px solid transparent;
    border-bottom: 4px solid #333;
}

.doc-tab {
    width: 51.700px;
    display: flex;
    align-items: center;
    justify-content: center;
    font: 12.500px/16px "Open Sans", sans-serif;
    color: #111;
    background: linear-gradient(#e4e4e4, #c6c6c6);
    border: 1px solid #777;
    border-top: none;
    border-left-color: #999;
    border-radius: 0 0 6px 6px;
    margin-bottom: 1px;
}

.doc-tab.current {
    width: 64px;
    justify-content: flex-start;
    padding-left: 7px;
    gap: 5px;
    background: #fff;
}

.doc-tab.current svg {
    margin-bottom: 8px;
}

/* status bar */
.status {
    height: 25px;
    flex: none;
    position: relative;
    display: flex;
    align-items: center;
    background: linear-gradient(#f4f4f4, #bdbdbd);
    color: #222;
}

.status-text {
    margin-left: 1px;
}

.cell {
    position: absolute;
    top: 3px;
    height: 22px;
    border-left: 1px solid #ccc;
    text-align: center;
    line-height: 22px;
    color: #111;
}

.c1 { left: 1287px; width: 30px; }
.c2 { left: 1327px; width: 32px; }

.watermark {
    position: absolute;
    left: 1245px;
    top: 689px;
    display: flex;
    gap: 1px;
}

.wm-text {
    display: flex;
    flex-direction: column;
}

.wm-cn {
    margin: 2px 0 0 11px;
    font-size: 13px;
    line-height: 18px;
    letter-spacing: 1px;
    color: #777;
}

.wm-en {
    font: 11px/11px "Liberation Mono", monospace;
    letter-spacing: .6px;
    color: #666;
}
```

FILE: basket.js
```js
// holes of the basket wall, drawn as polygons on the cone
const NS = 'http://www.w3.org/2000/svg';
const cx = 806.5;
const k = 0.56;
const rowCentres = [295, 317, 339, 361, 383, 405, 427];
const angles = [9, 27, 45, 63, 81];

function radius(yc) {
    return 133 - 0.0974 * (yc - 276);
}

function point(yc, deg, offset) {
    const a = deg * Math.PI / 180;
    const r = radius(yc) + offset;
    return [cx + r * Math.sin(a), yc + k * r * Math.cos(a)];
}

function edge(yc, deg, offset) {
    const halfW = 4.7;
    const pts = [];
    for (let i = 0; i <= 4; i++) pts.push(point(yc, deg - halfW + i * halfW / 2, offset));
    return pts;
}

function fmt(pts) {
    return pts.map(p => p[0].toFixed(1) + ',' + p[1].toFixed(1)).join(' ');
}

function addShape(parent, tag, points) {
    const el = document.createElementNS(NS, tag);
    el.setAttribute('points', points);
    parent.appendChild(el);
}

function addHole(yc, deg, offset, cut, lines, sills) {
    const halfH = offset > 0 ? 6.5 : 7.5;
    const top = edge(yc - halfH, deg, offset);
    const bottom = edge(yc + halfH, deg, offset);
    const pts = fmt(top.concat(bottom.slice().reverse()));
    addShape(cut, 'polygon', pts);
    addShape(lines, 'polygon', pts);
    // thin lit edge just inside the lower side of the hole
    const sill = edge(yc + halfH - 1.5, deg - 0.6, offset).slice(1, 4);
    addShape(sills, 'polyline', fmt(sill));
}

const byId = id => document.getElementById(id);

rowCentres.forEach(yc => {
    angles.forEach(a => {
        [180 - a, 180 + a].forEach(deg => {
            addHole(yc, deg, -1, byId('backCut'), byId('backLines'), byId('backSills'));
        });
        [-a, a].forEach(deg => {
            addHole(yc, deg, 1, byId('frontCut'), byId('frontLines'), byId('frontSills'));
        });
    });
});
```
